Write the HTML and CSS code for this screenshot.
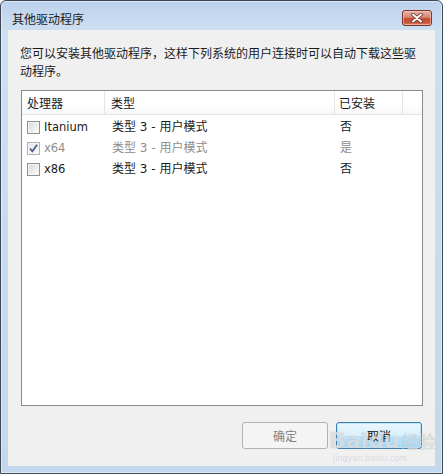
FILE: index.html
```html
<!DOCTYPE html>
<html>
<head>
<meta charset="utf-8">
<link rel="stylesheet" href="styles.css">
</head>
<body>
<div class="window">
  <div class="titlebar">
    <span class="title">其他驱动程序</span>
    <div class="close">
      <svg width="14" height="10" viewBox="0 0 14 10">
        <path d="M3 1.5 L11 8.5 M11 1.5 L3 8.5" stroke="#6b2c24" stroke-width="3.6" stroke-linecap="round"/>
        <path d="M3 1.5 L11 8.5 M11 1.5 L3 8.5" stroke="#ffffff" stroke-width="2" stroke-linecap="round"/>
      </svg>
    </div>
  </div>
  <div class="client">
    <p class="desc">您可以安装其他驱动程序，这样下列系统的用户连接时可以自动下载这些驱<br>动程序。</p>
    <div class="list">
      <div class="head">
        <div class="hc hc1">处理器</div>
        <div class="hc hc2">类型</div>
        <div class="hc hc3">已安装</div>
        <div class="hc hc4"></div>
      </div>
      <div class="rows">
        <div class="row">
          <div class="cell c1"><span class="cb"></span><span class="cpu">Itanium</span></div>
          <div class="cell c2">类型 3 - 用户模式</div>
          <div class="cell c3">否</div>
        </div>
        <div class="row disabled">
          <div class="cell c1"><span class="cb checked"><svg width="11" height="11" viewBox="0 0 11 11"><path d="M2 5.5 L4.3 8.3 L9.2 1.8" fill="none" stroke="#4a5a8a" stroke-width="1.7"/></svg></span><span class="cpu">x64</span></div>
          <div class="cell c2">类型 3 - 用户模式</div>
          <div class="cell c3">是</div>
        </div>
        <div class="row">
          <div class="cell c1"><span class="cb"></span><span class="cpu">x86</span></div>
          <div class="cell c2">类型 3 - 用户模式</div>
          <div class="cell c3">否</div>
        </div>
      </div>
    </div>
    <div class="buttons">
      <div class="btn btn-ok">确定</div>
      <div class="btn btn-cancel">取消</div>
    </div>
  </div>
  <div class="watermark">
    <div class="wm-main"><span class="wm-bai">Bai</span><span class="wm-du">du</span><span class="wm-cn">经验</span></div>
    <div class="wm-url">jingyan.baidu.com</div>
  </div>
</div>
</body>
</html>
```
FILE: styles.css
```css
html, body {
  margin: 0;
  padding: 0;
  background: #ffffff;
}
body {
  font-family: "DejaVu Sans", "Noto Sans CJK SC", sans-serif;
  font-size: 12px;
  color: #1a1a1a;
}
.window {
  position: relative;
  width: 443px;
  height: 474px;
  box-sizing: border-box;
  border: 1px solid #3e4852;
  border-radius: 6px 6px 0 0;
  background: linear-gradient(180deg, #bcd2ec 0px, #cddff2 30px, #c3d7ee 100%);
  padding: 0 7px 7px 7px;
  display: flex;
  flex-direction: column;
  box-shadow: inset 0 0 0 1px rgba(255,255,255,0.45);
}
.titlebar {
  height: 29px;
  display: flex;
  align-items: flex-start;
  justify-content: space-between;
  flex: none;
}
.title {
  font-family: "Noto Sans CJK SC", sans-serif;
  font-size: 12px;
  line-height: 16px;
  margin-top: 10px;
  padding-left: 4px;
  color: #1b1b1b;
}
.close {
  width: 30px;
  height: 16px;
  box-sizing: border-box;
  margin-top: 9px;
  margin-right: 3px;
  border: 1px solid #7a3328;
  border-radius: 3px;
  background: linear-gradient(180deg, #e6b3a6 0%, #d68572 45%, #c24a30 55%, #c9583b 85%, #dc8f6e 100%);
  display: flex;
  align-items: center;
  justify-content: center;
  box-shadow: inset 0 0 0 1px rgba(255,220,210,0.5);
}
.close svg {
  display: block;
}
.client {
  flex: 1;
  background: #f0f0f0;
  display: flex;
  flex-direction: column;
  padding: 14px 12px 0 12px;
}
.desc {
  margin: 0;
  font-family: "Noto Sans CJK SC", sans-serif;
  font-size: 12px;
  line-height: 18px;
  height: 36px;
  color: #1b1b1b;
}
.list {
  margin: 10px 0 0 1px;
  height: 316px;
  box-sizing: border-box;
  border: 1px solid #868a91;
  background: #ffffff;
}
.head {
  display: grid;
  grid-template-columns: 83px 230px 68px 1fr;
  height: 23px;
  background: linear-gradient(180deg, #ffffff 0%, #ffffff 50%, #f6f7f9 100%);
  border-bottom: 1px solid #e2e4e8;
}
.hc {
  font-family: "Noto Sans CJK SC", sans-serif;
  font-size: 12px;
  line-height: 23px;
  border-right: 1px solid #e3e5e8;
  color: #1b1b1b;
}
.hc1 { padding-left: 5px; }
.hc2 { padding-left: 6px; }
.hc3 { padding-left: 4px; }
.hc4 { border-right: none; }
.rows {
  padding-top: 2px;
}
.row {
  display: grid;
  grid-template-columns: 83px 230px 1fr;
  height: 21px;
  align-items: center;
}
.cell {
  font-size: 12px;
  line-height: 21px;
  color: #1b1b1b;
  white-space: nowrap;
}
.c1 {
  padding-left: 5px;
  display: flex;
  align-items: center;
}
.c2 { padding-left: 7px; }
.c3 { padding-left: 5px; }
.cpu {
  font-size: 11.5px;
  margin-left: 4px;
}
.cb {
  width: 13px;
  height: 13px;
  box-sizing: border-box;
  border: 1px solid #8e8f8f;
  background: linear-gradient(135deg, #d6d6d6 0%, #ececec 55%, #fdfdfd 100%);
  box-shadow: inset 0 0 0 1px #f6f6f6;
  display: flex;
  align-items: center;
  justify-content: center;
  flex: none;
}
.cb.checked {
  border-color: #b3b3b3;
  background: linear-gradient(135deg, #e6e6e6 0%, #f2f2f2 55%, #fdfdfd 100%);
}
.cb svg { display: block; }
.row.disabled .cell {
  color: #8d8d8d;
}
.buttons {
  display: flex;
  justify-content: flex-end;
  gap: 8px;
  margin-top: 16px;
  padding-right: 1px;
}
.btn {
  width: 86px;
  height: 27px;
  box-sizing: border-box;
  border-radius: 3px;
  font-family: "Noto Sans CJK SC", sans-serif;
  font-size: 12px;
  line-height: 25px;
  text-align: center;
}
.btn-ok {
  border: 1px solid #adb2b5;
  background: #f4f4f4;
  color: #838383;
}
.btn-cancel {
  border: 1px solid #3c7fb1;
  background: linear-gradient(180deg, #eaf6fd 0%, #d9f0fc 50%, #bee6fd 51%, #a7d9f5 100%);
  box-shadow: inset 0 0 0 1px #bfe3f7;
  color: #111111;
}
.watermark {
  position: absolute;
  left: 328px;
  top: 427px;
  pointer-events: none;
}
.wm-main {
  display: flex;
  align-items: baseline;
  line-height: 26px;
}
.wm-bai, .wm-du {
  font-family: "DejaVu Sans", sans-serif;
  font-weight: bold;
  font-size: 22px;
  color: rgba(255,255,255,0.6);
  text-shadow: 0 0 1px rgba(120,130,140,0.6);
}
.wm-cn {
  font-family: "Noto Sans CJK SC", sans-serif;
  font-size: 17px;
  color: rgba(255,255,255,0.55);
  text-shadow: 0 0 1px rgba(120,130,140,0.6);
  margin-left: 2px;
}
.wm-url {
  font-family: "DejaVu Sans", sans-serif;
  font-size: 8px;
  line-height: 10px;
  color: rgba(200,205,215,0.6);
  margin-left: 4px;
}
```
